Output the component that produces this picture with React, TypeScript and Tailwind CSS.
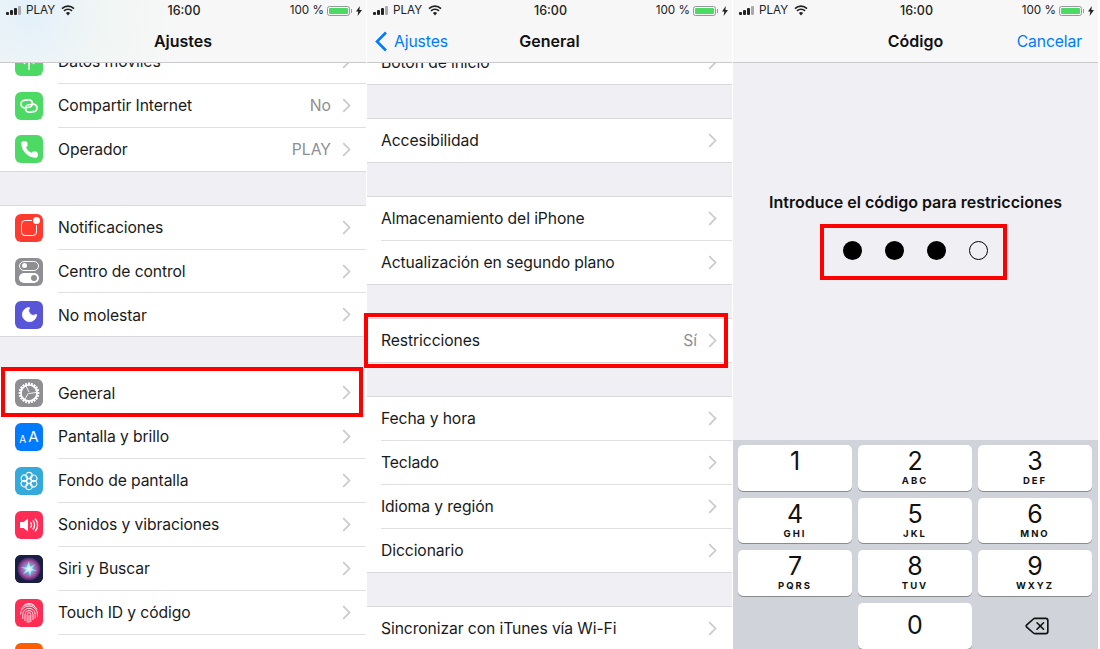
import type { ReactNode } from "react";
import { Delete, Moon, Phone } from "lucide-react";

function StatusBar() {
  return (
    <div className="grid h-[21px] grid-cols-3 items-center pl-[6px] pr-[4px] pt-px text-[11.7px] text-[#222]">
      <div className="flex items-center">
        <div className="flex items-end gap-[1px]">
          <span className="h-[3px] w-[3px] rounded-[1px] bg-[#222]" />
          <span className="h-[5px] w-[3px] rounded-[1px] bg-[#222]" />
          <span className="h-[7px] w-[3px] rounded-[1px] bg-[#222]" />
          <span className="h-[9px] w-[3px] rounded-[1px] bg-[#aaa]" />
        </div>
        <span className="ml-[5px]">PLAY</span>
        <svg className="ml-[6px]" width="14" height="11" viewBox="0 0 14 11">
          <path d="M7 10.5 4.9 8a3 3 0 0 1 4.2 0z" fill="#222" />
          <path d="M1 3.6a8.6 8.6 0 0 1 12 0M3 5.9a5.7 5.7 0 0 1 8 0" fill="none" stroke="#222" strokeWidth="1.7" />
        </svg>
      </div>
      <div className="text-center text-[12.5px] font-medium">16:00</div>
      <div className="flex items-center justify-end">
        <span>100 %</span>
        <div className="ml-[3px] flex h-[10px] w-[23px] rounded-[2.5px] border border-[#999] p-[1px]">
          <div className="flex-1 rounded-[1px] bg-[#4cd964]" />
        </div>
        <span className="ml-[1px] h-[4px] w-[1px] bg-[#999]" />
        <svg className="ml-[4px]" width="6" height="10" viewBox="0 0 6 10">
          <path d="M3.8 0 0 5.6h2.3L1.6 10 6 3.9H3.4z" fill="#222" />
        </svg>
      </div>
    </div>
  );
}

function Header({ title, left, right, tint }: { title: string; left?: ReactNode; right?: ReactNode; tint?: boolean }) {
  return (
    <div
      className={
        tint
          ? "relative z-10 h-[63px] flex-none border-b border-[#c9c9cb] bg-[radial-gradient(circle_at_8%_25%,#e3f0fb_0%,#f1f6f4_22%,#f7f7f7_45%)]"
          : "relative z-10 h-[63px] flex-none border-b border-[#c9c9cb] bg-[#f7f7f7]"
      }
    >
      <StatusBar />
      <div className="grid h-[41px] grid-cols-[1fr_auto_1fr] items-center">
        <div>{left}</div>
        <div className="-mt-[2px] text-[16px] font-semibold text-[#111]">{title}</div>
        <div className="text-right">{right}</div>
      </div>
    </div>
  );
}

function Chevron() {
  return (
    <svg className="ml-[11px] flex-none" width="9" height="15" viewBox="0 0 9 15">
      <path d="M1.2 1.2l6.3 6.3-6.3 6.3" fill="none" stroke="#c9c9ce" strokeWidth="1.7" />
    </svg>
  );
}

function Row({ label, value, icon, last, tall }: { label: string; value?: string; icon?: ReactNode; last?: boolean; tall?: boolean }) {
  const rowHeight = tall ? "h-[44px] pl-[14px]" : "h-[43.9px] pl-[15px]";
  return (
    <div className={`flex ${rowHeight} items-center bg-white ${last ? "border-b border-[#d9d9dc]" : ""}`}>
      {icon && <div className="mr-[15px] flex-none">{icon}</div>}
      <div className={`flex h-full min-w-0 flex-1 items-center pr-[15px] ${last ? "" : "border-b border-[#e0e0e2]"}`}>
        <span className="flex-1 pt-px text-[15.7px] tracking-[-0.1px] text-[#1a1a1a]">{label}</span>
        {value && <span className="pt-px text-[15.7px] text-[#8e8e93]">{value}</span>}
        <Chevron />
      </div>
    </div>
  );
}

function Tile({ color, children }: { color: string; children?: ReactNode }) {
  return (
    <div className={`flex h-[28px] w-[28px] items-center justify-center overflow-hidden rounded-[6px] ${color}`}>
      {children}
    </div>
  );
}

function GearIcon() {
  const teeth = Array.from({ length: 20 }, (_, i) => i * 18);
  return (
    <svg width="24" height="24" viewBox="0 0 24 24" fill="none" stroke="#fff">
      <circle cx="12" cy="12" r="8" strokeWidth="1.6" />
      {teeth.map((deg) => (
        <line key={deg} x1="12" y1="1.6" x2="12" y2="4.4" strokeWidth="2" transform={`rotate(${deg} 12 12)`} />
      ))}
      <path d="M12 11 9 4.8M12 12.5 19 11.5M11.5 12 8 18" strokeWidth="0.9" />
    </svg>
  );
}

function LinkIcon() {
  return (
    <svg width="22" height="18" viewBox="0 0 22 18" fill="none" stroke="#fff" strokeWidth="1.7">
      <rect x="3" y="3" width="11.5" height="7.5" rx="3.75" transform="rotate(-8 9 7)" />
      <rect x="7.5" y="7.5" width="11.5" height="7.5" rx="3.75" transform="rotate(-8 13 11)" />
    </svg>
  );
}

function FlowerIcon() {
  const petals = [0, 60, 120, 180, 240, 300];
  return (
    <svg width="22" height="22" viewBox="0 0 22 22" fill="none" stroke="#fff" strokeWidth="1.1">
      <circle cx="11" cy="11" r="2.6" />
      {petals.map((deg) => (
        <circle key={deg} cx="11" cy="5.6" r="3.2" transform={`rotate(${deg} 11 11)`} />
      ))}
    </svg>
  );
}

function SpeakerIcon() {
  return (
    <svg width="22" height="20" viewBox="0 0 22 20" fill="none" stroke="#fff">
      <path d="M2 7h3.5L10 3.5v13L5.5 13H2z" fill="#fff" stroke="none" />
      <path d="M12.5 7.5a3.5 3.5 0 0 1 0 5M14.8 5.5a6.5 6.5 0 0 1 0 9M17 3.5a9.4 9.4 0 0 1 0 13" strokeWidth="1.3" />
    </svg>
  );
}

function FingerprintIcon() {
  return (
    <svg width="22" height="24" viewBox="0 0 22 24" fill="none" stroke="#fff" strokeWidth="0.9" opacity="0.95">
      <path d="M3 8.5A9 9 0 0 1 19 8.5" />
      <path d="M2.5 13.5a8.5 8.5 0 0 1 17 0v2.5" />
      <path d="M4.8 18v-4.5a6.2 6.2 0 0 1 12.4 0v4" />
      <path d="M7 20v-6.5a4 4 0 0 1 8 0v5.5" />
      <path d="M9.2 21.5v-8a1.8 1.8 0 0 1 3.6 0v7.5" />
      <path d="M11 14v8" />
      <path d="M5.5 4.5a9 9 0 0 1 11 0" />
    </svg>
  );
}

function SiriIcon() {
  return (
    <svg width="28" height="28" viewBox="0 0 28 28">
      <defs>
        <radialGradient id="siriGlow">
          <stop offset="0%" stopColor="#eaf6ff" />
          <stop offset="35%" stopColor="#58b6d8" />
          <stop offset="70%" stopColor="#b0479f" />
          <stop offset="100%" stopColor="#2f2f63" />
        </radialGradient>
      </defs>
      <rect width="28" height="28" fill="#1b1e42" />
      <circle cx="14" cy="14" r="11.5" fill="url(#siriGlow)" />
      <path d="M14 6l1.2 6 5-3-3.2 4.6L22 16l-5.6-.6L15 22l-1.4-6-5.6 3.4 3-5L5.5 12l6 .4z" fill="#fff" opacity="0.55" />
    </svg>
  );
}

function SettingsPane() {
  return (
    <div className="flex w-[366px] flex-none flex-col overflow-hidden bg-[#efeff4]">
      <Header title="Ajustes" tint />
      <div className="-mt-[23px]">
        <Row
          label="Datos móviles"
          icon={
            <Tile color="bg-[#4cd964]">
              <svg width="18" height="18" viewBox="0 0 18 18" fill="none" stroke="#fff" strokeWidth="1.5">
                <path d="M9 4v13M5 4a5 5 0 0 0 0 7M13 4a5 5 0 0 1 0 7" />
              </svg>
            </Tile>
          }
        />
        <Row label="Compartir Internet" value="No" icon={<Tile color="bg-[#4cd964]"><LinkIcon /></Tile>} />
        <Row
          label="Operador"
          value="PLAY"
          last
          icon={
            <Tile color="bg-[#4cd964]">
              <Phone size={19} color="#fff" fill="#fff" strokeWidth={1} />
            </Tile>
          }
        />
      </div>
      <div className="mt-[33px] border-t border-[#d9d9dc]">
        <Row
          label="Notificaciones"
          icon={
            <Tile color="bg-[#ff3b30]">
              <div className="relative h-[16px] w-[16px] rounded-[4px] border-[1.5px] border-white">
                <span className="absolute -right-[4px] -top-[4px] h-[7px] w-[7px] rounded-full bg-white ring-1 ring-[#ff3b30]" />
              </div>
            </Tile>
          }
        />
        <Row
          label="Centro de control"
          icon={
            <Tile color="bg-[#8e8e93]">
              <div className="flex flex-col gap-[2px]">
                <div className="flex h-[10px] w-[20px] items-center rounded-full border-[1.5px] border-white pl-[2px]">
                  <span className="h-[5px] w-[5px] rounded-full bg-white" />
                </div>
                <div className="flex h-[10px] w-[20px] items-center justify-end rounded-full bg-white pr-[2px]">
                  <span className="h-[6px] w-[6px] rounded-full bg-[#8e8e93]" />
                </div>
              </div>
            </Tile>
          }
        />
        <Row
          label="No molestar"
          last
          icon={
            <Tile color="bg-[#5856d6]">
              <Moon size={19} color="#fff" fill="#fff" strokeWidth={1} />
            </Tile>
          }
        />
      </div>
      <div className="mt-[34px]">
        <Row label="General" icon={<Tile color="bg-[#8e8e93]"><GearIcon /></Tile>} />
        <Row
          label="Pantalla y brillo"
          icon={
            <Tile color="bg-[#007aff]">
              <span className="-mt-[2px] flex items-end font-normal leading-none text-white">
                <span className="text-[10px]">A</span>
                <span className="ml-[2px] text-[15px]">A</span>
              </span>
            </Tile>
          }
        />
        <Row label="Fondo de pantalla" icon={<Tile color="bg-[#34aadc]"><FlowerIcon /></Tile>} />
        <Row label="Sonidos y vibraciones" icon={<Tile color="bg-[#ff2d55]"><SpeakerIcon /></Tile>} />
        <Row label="Siri y Buscar" icon={<Tile color="bg-[#1a1d3d]"><SiriIcon /></Tile>} />
        <Row label="Touch ID y código" icon={<Tile color="bg-[#ff2d55]"><FingerprintIcon /></Tile>} />
        <Row label="" icon={<Tile color="bg-[#ff5e00]" />} />
      </div>
    </div>
  );
}

function GeneralPane() {
  const back = (
    <div className="flex items-center pl-[8px] text-[15.7px] tracking-[-0.1px] text-[#007aff]">
      <svg width="13" height="21" viewBox="0 0 13 21">
        <path d="M11 1.5 2 10.5l9 9" fill="none" stroke="#007aff" strokeWidth="2.6" />
      </svg>
      <span className="ml-[6px]">Ajustes</span>
    </div>
  );
  return (
    <div className="flex w-[365px] flex-none flex-col overflow-hidden bg-[#efeff4]">
      <Header title="General" left={back} />
      <div className="-mt-[22px]">
        <Row label="Botón de inicio" tall last />
      </div>
      <div className="mt-[33px] border-t border-[#d9d9dc]">
        <Row label="Accesibilidad" tall last />
      </div>
      <div className="mt-[33px] border-t border-[#d9d9dc]">
        <Row label="Almacenamiento del iPhone" tall />
        <Row label="Actualización en segundo plano" tall last />
      </div>
      <div className="mt-[33px] border-t border-[#d9d9dc]">
        <Row label="Restricciones" value="Sí" tall last />
      </div>
      <div className="mt-[33px] border-t border-[#d9d9dc]">
        <Row label="Fecha y hora" tall />
        <Row label="Teclado" tall />
        <Row label="Idioma y región" tall />
        <Row label="Diccionario" tall last />
      </div>
      <div className="mt-[33px] border-t border-[#d9d9dc]">
        <Row label="Sincronizar con iTunes vía Wi-Fi" tall />
      </div>
    </div>
  );
}

const keys = [
  ["1", ""],
  ["2", "ABC"],
  ["3", "DEF"],
  ["4", "GHI"],
  ["5", "JKL"],
  ["6", "MNO"],
  ["7", "PQRS"],
  ["8", "TUV"],
  ["9", "WXYZ"],
];

function Key({ digit, letters }: { digit: string; letters?: string }) {
  return (
    <div className="flex h-[45.5px] flex-col items-center rounded-[5px] bg-white text-[#111] shadow-[0_1px_0_#8a8b8e]">
      {letters === undefined ? (
        <span className="text-[25px] leading-[45px]">{digit}</span>
      ) : (
        <>
          <span className="mt-[2px] h-[28px] text-[25px] leading-[28px]">{digit}</span>
          <span className="h-[12px] text-[9.5px] font-bold leading-[12px] tracking-[2px]">{letters}</span>
        </>
      )}
    </div>
  );
}

function PasscodePane() {
  return (
    <div className="flex w-[365px] flex-none flex-col overflow-hidden bg-[#efeff4]">
      <Header
        title="Código"
        right={<span className="pr-[16px] text-[15.7px] tracking-[-0.1px] text-[#007aff]">Cancelar</span>}
      />
      <div className="flex flex-1 flex-col items-center pt-[129px]">
        <div className="text-[16px] font-semibold leading-[20px] text-[#111]">Introduce el código para restricciones</div>
        <div className="mt-[29px] flex gap-[23px]">
          <span className="h-[19px] w-[19px] rounded-full bg-black" />
          <span className="h-[19px] w-[19px] rounded-full bg-black" />
          <span className="h-[19px] w-[19px] rounded-full bg-black" />
          <span className="h-[19px] w-[19px] rounded-full border border-black" />
        </div>
      </div>
      <div className="grid h-[209px] flex-none grid-cols-3 gap-x-[6px] gap-y-[6.8px] bg-[#d0d4da] pl-[5px] pr-[6px] pt-[5px]">
        {keys.map(([digit, letters]) => (
          <Key key={digit} digit={digit} letters={letters} />
        ))}
        <div />
        <Key digit="0" />
        <div className="flex h-[45.5px] items-center justify-center pl-[4px]">
          <Delete size={26} color="#111" strokeWidth={1.5} />
        </div>
      </div>
    </div>
  );
}

export default function App() {
  return (
    <div className="relative flex h-[649px] w-[1098px] gap-px overflow-hidden bg-white font-['Inter',sans-serif]">
      <SettingsPane />
      <GeneralPane />
      <PasscodePane />
      <div className="absolute left-[1px] top-[367px] z-20 h-[50px] w-[362px] border-4 border-[#fe0000]" />
      <div className="absolute left-[364px] top-[313px] z-20 h-[55px] w-[364px] border-4 border-[#fe0000]" />
      <div className="absolute left-[820px] top-[224px] z-20 h-[56px] w-[187px] border-4 border-[#fe0000]" />
    </div>
  );
}
